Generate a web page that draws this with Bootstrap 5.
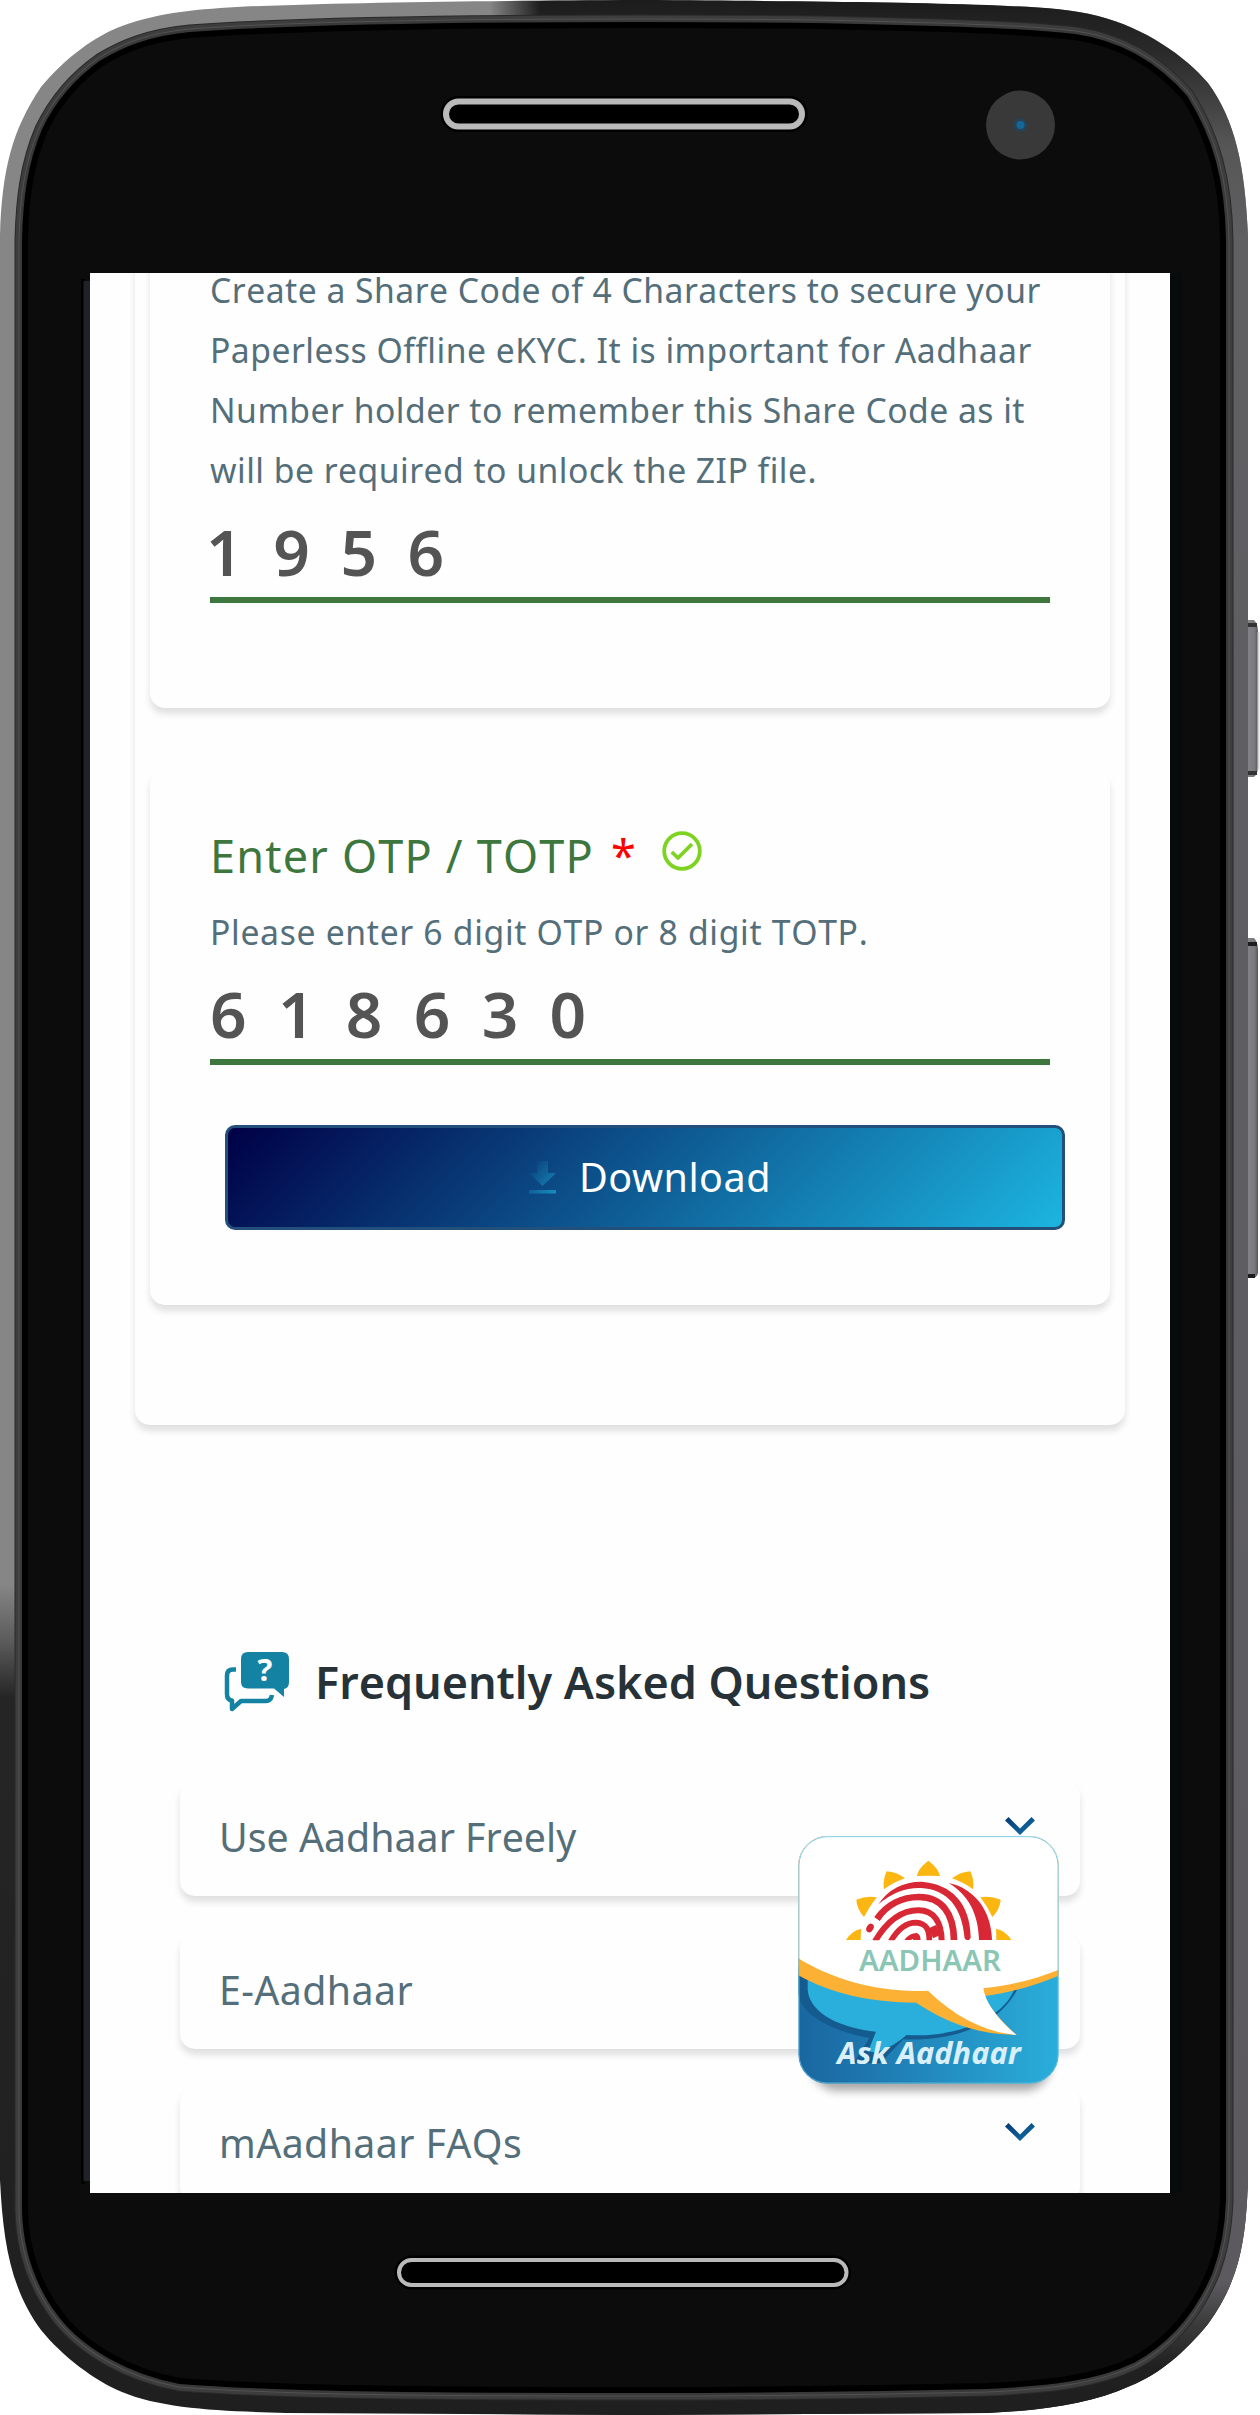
<!DOCTYPE html>
<html lang="en">
<head>
<meta charset="utf-8">
<meta name="viewport" content="width=device-width, initial-scale=1">
<title>Aadhaar Paperless Offline eKYC</title>
<link href="https://cdn.jsdelivr.net/npm/bootstrap@5.3.0/dist/css/bootstrap.min.css" rel="stylesheet">
<style>
body{background:#fff;font-family:"Noto Sans",sans-serif;width:1260px;font-kerning:none;overflow-x:hidden}
.phone{width:1260px;height:2415px;padding:273px 90px 0}
.frame{left:0;top:0;width:1260px;height:2415px}
.screen{width:1080px;height:1920px;background:#fefefe}
.panel{margin:-53px 45px 0;padding:0 15px 120px;background:#fefefe;border-radius:0 0 15px 15px;box-shadow:0 6px 7px rgba(0,0,0,.12)}
.step{background:#fefefe;border-radius:15px;box-shadow:0 6px 7px rgba(0,0,0,.12);padding:0 60px}
.step-code{height:488px;padding-top:40px}
.step-otp{height:535px;margin-top:62px;padding-top:51px}
.hint{font-size:33.7px;line-height:60px;letter-spacing:.48px;color:#546e7a;white-space:nowrap}
.hint-otp{margin-top:11px;letter-spacing:.68px}
.digits{height:103px;border-bottom:6px solid #3d773d;color:#545454;font-size:64px;font-weight:600;letter-spacing:31.3px;line-height:88px;padding-top:8px}
.digits-code{letter-spacing:30.6px;text-indent:-4px}
.label-otp{font-size:45px;line-height:70px;letter-spacing:1.2px;color:#3d773d}
.star{color:red;margin-left:17px}
.tick{width:40px;height:40px;margin:0 0 11px 25px}
.btn-dl{width:840px;height:105px;margin:60px 0 0 15px;border:3px solid #22507a;border-radius:10px;background:linear-gradient(135deg,#000046,#1cb5e0);color:#fff;font-size:39.5px;line-height:1;letter-spacing:.5px}
.btn-dl svg{width:27px;height:33px;margin:0 23px 0 10px}
.faq-head{margin:219px 0 0 134px;height:75px;color:#263238;font-size:44.9px;font-weight:600;line-height:60px}
.faq-head svg{width:66px;height:62px;margin-right:25px}
.faq-list{margin:62px 90px 0;gap:38px}
.faq-item{height:115px;border-radius:15px;background:#fefefe;box-shadow:0 6px 7px rgba(0,0,0,.12);padding:0 45px 8px 39px;font-size:39.3px;color:#546e7a}
.faq-item span{padding-top:5px}
.faq-wide{letter-spacing:.4px}
.chev{width:30px;height:18px;margin-bottom:18px}
.ask{left:798px;top:1836px;width:262px;height:270px}
</style>
<script src="https://cdn.jsdelivr.net/npm/bootstrap@5.3.0/dist/js/bootstrap.bundle.min.js"></script>
</head>
<body>
<div class="phone position-relative">
<svg class="frame position-absolute" viewBox="0 0 1260 2415">
<defs>
<linearGradient id="rim" x1="0" y1="0" x2="0" y2="2415" gradientUnits="userSpaceOnUse"><stop offset="0" stop-color="#868686"/><stop offset=".656" stop-color="#868686"/><stop offset=".68" stop-color="#5a5a5a"/><stop offset=".703" stop-color="#252525"/><stop offset="1" stop-color="#1f1f1f"/></linearGradient>
<linearGradient id="rimR" x1="0" y1="0" x2="0" y2="2415" gradientUnits="userSpaceOnUse"><stop offset="0" stop-color="#1c1c1c"/><stop offset=".022" stop-color="#2a2a2a"/><stop offset=".06" stop-color="#565656"/><stop offset=".1" stop-color="#606063"/><stop offset=".945" stop-color="#5c5a5f"/><stop offset=".962" stop-color="#3c3c3c"/><stop offset=".98" stop-color="#202020"/><stop offset="1" stop-color="#1f1f1f"/></linearGradient>
<linearGradient id="edge" x1="490" y1="0" x2="540" y2="0" gradientUnits="userSpaceOnUse"><stop offset="0" stop-color="#fff" stop-opacity="0"/><stop offset="1" stop-color="#fff"/></linearGradient>
<mask id="right"><rect width="1260" height="2415" fill="url(#edge)"/></mask>
<linearGradient id="key"><stop offset="0" stop-color="#858488"/><stop offset=".7" stop-color="#7a797d"/><stop offset="1" stop-color="#57565a"/></linearGradient>
<path id="shell" d="M640 0C480 1 370 2 245 6.500C200 9 160 12 122 26C95 36 65 58 41 87C12 130 2 170 0 235V2180C3 2240 10 2288 41 2330C62 2356 95 2381 122 2392C163 2409 220 2411 286 2413L640 2415L987 2413C1045 2410 1090 2404 1130 2386C1160 2374 1185 2352 1208 2324C1240 2280 1246 2240 1248 2180V235C1245 165 1235 120 1208 83C1185 56 1145 28 1098 16C1065 8 1030 7 987 5C900 2 800 1 640 0Z"/>
<path id="glass" d="M640 25C450 25 300 27 190 35C150 39 125 49 102 63C75 82 58 103 45 130C30 165 26 200 25 240V2210C26 2250 38 2285 61 2315C85 2346 130 2372 180 2381C280 2389 450 2390 640 2390C800 2390 900 2388 987 2386C1050 2383 1095 2378 1133 2360C1175 2337 1197 2303 1210 2271C1218 2250 1222 2230 1223 2200V240C1222 180 1210 138 1185 98C1165 75 1130 45 1075 37C1000 28 800 25 640 25Z"/>
</defs>
<path d="M1246 620h8q4 4 4 12v134q0 8-4 11h-8z" fill="url(#key)"/><path d="M1246 623h11v4h-11zm0 148h11v4h-11z" fill="#333"/>
<path d="M1257.500 632h2v138h-2z" fill="#d5d5d7"/>
<path d="M1246 938h8q4 4 4 12v322q0 4-4 6h-8z" fill="url(#key)"/><path d="M1246 942h11v4h-11zm0 332h9v4h-9z" fill="#1d1d1d"/>
<use href="#shell" fill="url(#rim)"/>
<use href="#shell" fill="url(#rimR)" mask="url(#right)"/>
<use href="#glass" fill="none" stroke="#2a2a2a" stroke-width="21"/>
<use href="#glass" fill="none" stroke="#3d3d3e" stroke-width="19"/>
<use href="#glass" fill="none" stroke="#535354" stroke-width="13"/>
<use href="#glass" fill="none" stroke="#39393a" stroke-width="11"/>
<use href="#glass" fill="#0c0c0c" stroke="#000" stroke-width="6"/>
<rect x="81" y="279" width="4" height="1905" fill="#000"/><rect x="83.500" y="281" width="7" height="1900" fill="#1f2228"/>
<rect x="1170" y="273" width="12" height="1920" fill="#080b0b"/>
<rect x="446" y="101.500" width="356" height="25" rx="12.500" fill="#000" stroke="#000" stroke-width="11"/>
<rect x="446" y="101.500" width="356" height="25" rx="12.500" fill="#000" stroke="#bababa" stroke-width="6"/>
<rect x="399" y="2260" width="447.500" height="25" rx="12.500" fill="#000" stroke="#000" stroke-width="9"/>
<rect x="399" y="2260" width="447.500" height="25" rx="12.500" fill="#000" stroke="#bababa" stroke-width="4"/>
<circle cx="1020.500" cy="125" r="34.500" fill="#393939"/><circle cx="1020.500" cy="125" r="7" fill="#284253"/><circle cx="1020.500" cy="125" r="4" fill="#14679a"/>
</svg>

<main class="screen position-relative overflow-hidden">
<section class="panel">
<div class="step step-code">
<p class="hint mb-0">Create a Share Code of 4 Characters to secure your<br>Paperless Offline eKYC. It is important for Aadhaar<br>Number holder to remember this Share Code as it<br>will be required to unlock the ZIP file.</p>
<div class="digits digits-code">1956</div>
</div>
<div class="step step-otp">
<div class="label-otp d-flex align-items-center"><span>Enter OTP / TOTP</span><span class="star">*</span>
<svg class="tick" viewBox="0 0 40 40" fill="none" stroke="#7ed321" stroke-width="3.800"><circle cx="20" cy="20" r="17.800"/><path d="M9.800 21l6.200 6L30 13" stroke-linejoin="round"/></svg></div>
<p class="hint hint-otp mb-0">Please enter 6 digit OTP or 8 digit TOTP.</p>
<div class="digits">618630</div>
<button class="btn btn-dl d-flex align-items-center justify-content-center p-0" type="button">
<svg viewBox="0 0 27 33"><defs><linearGradient id="dl" x1="0" y1="0" x2="1" y2="1"><stop offset="0" stop-color="#0a3873"/><stop offset="1" stop-color="#188fc2"/></linearGradient></defs><path d="M8 0h11v12h8L13.500 25 0 12h8zM0 29h27v3.500H0z" fill="url(#dl)"/></svg><span>Download</span></button>
</div>
</section>

<h2 class="faq-head mb-0 d-flex align-items-center">
<svg viewBox="0 0 66 62"><path d="M12 18.500H9Q3 18.500 3 24.500V43Q3 49 8 49.500V58L17 50H42Q47 50 48 44" fill="none" stroke="#1482a3" stroke-width="4.500" stroke-linejoin="round"/><path d="M24 1H58Q65 1 65 8V31Q65 37 60 38V46L50 37.500H24Q17 37.500 17 31V8Q17 1 24 1Z" fill="#1482a3"/><text x="41" y="30" text-anchor="middle" font-family="Noto Sans" font-weight="700" font-size="31" fill="#fff">?</text></svg>
<span>Frequently Asked Questions</span></h2>

<div class="faq-list d-flex flex-column">
<div class="faq-item d-flex align-items-center justify-content-between"><span>Use Aadhaar Freely</span><svg class="chev" viewBox="0 0 30 18"><defs><linearGradient id="cv" x1="0" y1="0" x2="1" y2="1"><stop offset="0" stop-color="#063872"/><stop offset="1" stop-color="#1273ab"/></linearGradient></defs><path d="M3.500 0L15 11.500 26.500 0 30 3.500 15 18 0 3.500z" fill="url(#cv)"/></svg></div>
<div class="faq-item faq-wide d-flex align-items-center justify-content-between"><span>E-Aadhaar</span><svg class="chev" viewBox="0 0 30 18"><path d="M3.500 0L15 11.500 26.500 0 30 3.500 15 18 0 3.500z" fill="url(#cv)"/></svg></div>
<div class="faq-item faq-wide d-flex align-items-center justify-content-between"><span>mAadhaar FAQs</span><svg class="chev" viewBox="0 0 30 18"><path d="M3.500 0L15 11.500 26.500 0 30 3.500 15 18 0 3.500z" fill="url(#cv)"/></svg></div>
</div>
</main>

<svg class="ask position-absolute" viewBox="84 168 786 810">
<defs>
<linearGradient id="base"><stop offset="0" stop-color="#1a67a0"/><stop offset=".15" stop-color="#1c6fa8"/><stop offset="1" stop-color="#2aaedb"/></linearGradient>
<clipPath id="tile"><rect x="85" y="168" width="781" height="743" rx="88"/></clipPath>
<filter id="sh" x="-20%" y="-20%" width="140%" height="150%"><feGaussianBlur stdDeviation="14"/></filter>
</defs>
<rect x="125" y="260" width="715" height="672" rx="75" fill="#000" opacity=".34" filter="url(#sh)"/>
<g clip-path="url(#tile)">
<rect x="85" y="168" width="781" height="743" fill="url(#base)"/>
<path d="M85 560V640C90 705 190 755 298 774L250 850H330L400 778C560 785 690 730 742 628V560Z" fill="#145b8f"/>
<path d="M113 560V630C120 705 220 745 318 755L300 800Q290 825 330 812Q370 800 410 765C560 775 700 715 733 628V560Z" fill="#2aaedb"/>
<path d="M85 168H866V587C800 615 720 638 645 648C655 680 700 730 739 764C640 765 540 735 438 668C300 668 180 640 85 586Z" fill="#fcb134"/>
<path d="M85 168H866V569C790 600 710 618 640 625C646 670 690 725 740 765C650 757 560 715 474 632C330 640 190 600 85 535Z" fill="#fff"/>
</g>
<rect x="87" y="170" width="777" height="739" rx="86" fill="none" stroke="#5fc0e2" stroke-width="3" stroke-opacity=".8"/>
<path fill="#fbb612" d="M441 288C444 268 460 254 475 242C490 254 506 268 510 288Q475 286 441 288ZM342 328Q337 302 350 274Q380 276 405 295Q370 307 342 328ZM609 328Q614 302 601 274Q571 276 546 295Q581 307 609 328ZM282 411Q261 388 259 359Q290 346 320 352Q298 380 282 411ZM667 411Q690 388 692 359Q661 346 631 352Q653 380 667 411ZM228 480Q247 450 274 447Q272 463 272 480ZM724 480Q705 450 678 447Q679 463 679 480Z"/>
<g fill="none" stroke="#d82735">
<path d="M321 417C350 375 395 351 447 351C515 351 551 400 552 480" stroke-width="20"/>
<path d="M315 484C350 425 390 391 445 391C495 391 514 430 515 482" stroke-width="18"/>
<path d="M362 484C385 445 410 428 438 428C470 430 478 450 478 482" stroke-width="17"/>
<path d="M487 440L500 470" stroke-width="24"/></g>
<g fill="#d82735">
<path d="M325 373Q370 305 455 305C545 312 600 370 602 470Q602 480 592 480Q583 480 583 468C575 385 535 328 452 324Q385 322 325 373Z"/>
<path d="M536 309C615 325 665 395 666 480H627C625 400 595 345 536 309Z"/>
<path d="M403 480Q418 459 440 459Q452 463 452 480H430Q430 474 423 480Z"/>
<ellipse cx="300" cy="444" rx="10" ry="14" transform="rotate(30 300 444)"/></g>
<path d="M280 480.500H680V500H280Z" fill="#fff"/>
<text x="267" y="573" textLength="426" lengthAdjust="spacingAndGlyphs" font-family="Noto Sans" font-weight="600" font-size="87" fill="#8bc6b5">AADHAAR</text>
<text x="202" y="852" textLength="550" lengthAdjust="spacingAndGlyphs" font-family="Noto Sans" font-weight="700" font-style="italic" font-size="92" fill="#d9f0fa">Ask Aadhaar</text>
</svg>
</div>
</body>
</html>
